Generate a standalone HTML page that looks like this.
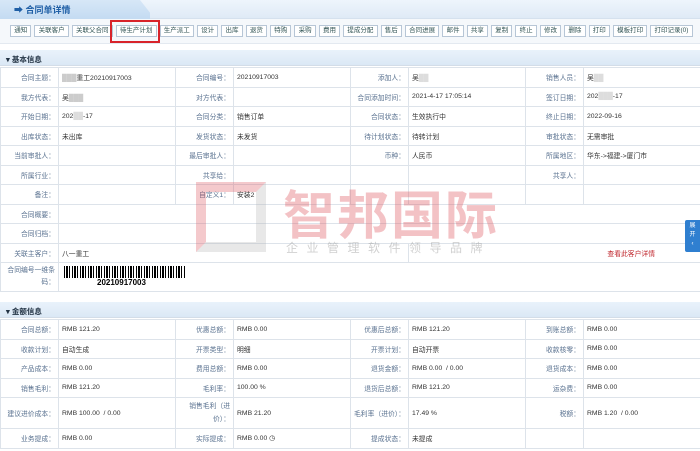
<!DOCTYPE html>
<html><head><meta charset="utf-8"><style>
*{margin:0;padding:0;box-sizing:border-box}
body{width:700px;height:451px;overflow:hidden;background:#fff;font-family:"Liberation Sans","Noto Sans CJK SC",sans-serif;font-size:7.5px;color:#333;position:relative}
.top{position:absolute;left:0;top:0;width:700px;height:19px;background:linear-gradient(#eef5fc,#dfeaf6);border-bottom:1px solid #d5e1ee}
.tab{position:absolute;left:0;top:0;width:150px;height:19px;background:linear-gradient(#d7e7f7,#c4dbf2);clip-path:polygon(0 0,140px 0,155px 19px,0 19px)}
.title{position:absolute;left:14px;top:3px;font-size:9px;font-weight:bold;color:#1f5fa6}
.bar{position:absolute;left:0;top:19px;width:700px;height:25px;background:#f5f8fb;border-bottom:1px solid #e3e9f0}
.btns{position:absolute;left:10px;top:25px;display:flex;gap:3px}
.btns span{border:1px solid #b7c6d6;background:#fff;height:12px;line-height:10px;padding:0 3.2px;color:#355;font-size:6.5px;white-space:nowrap}
.red{position:absolute;left:110px;top:20px;width:50px;height:23px;border:2px solid #d8232a}
.sec{position:absolute;left:0;width:700px;height:16px;background:linear-gradient(#e9f2fb,#dbe8f5);font-size:7.5px;font-weight:bold;color:#234;padding:4px 0 0 6px;border-bottom:1px solid #d3dde8}
table{position:absolute;left:0;width:700px;border-collapse:collapse;table-layout:fixed}
td{border:1px solid #dde3ea;height:19.5px;padding:0 3px;font-size:6.8px;white-space:nowrap;overflow:hidden}
td.l{text-align:right;color:#5a7290}
.wm{position:absolute;left:283px;top:174px;font-size:52px;color:rgba(220,80,90,.35);font-weight:bold;letter-spacing:2px;font-family:"Noto Sans CJK SC",sans-serif}
.wm2{position:absolute;left:286px;top:239px;font-size:12px;color:rgba(150,150,150,.45);letter-spacing:8.5px;font-family:"Noto Sans CJK SC",sans-serif}
.side{position:absolute;left:685px;top:220px;width:15px;height:32px;background:#2f7fd0;color:#fff;font-size:6px;text-align:center;line-height:9px;padding-top:2px;border-radius:2px 0 0 2px}
</style></head><body>
<div class="top"><div class="tab"></div><div class="title">➡ 合同单详情</div></div>
<div class="bar"></div>
<div class="btns"><span>通知</span><span>关联客户</span><span>关联父合同</span><span>待生产计划</span><span>生产派工</span><span>设计</span><span>出库</span><span>退货</span><span>特购</span><span>采购</span><span>费用</span><span>提成分配</span><span>售后</span><span>合同进展</span><span>邮件</span><span>共享</span><span>复制</span><span>终止</span><span>修改</span><span>删除</span><span>打印</span><span>模板打印</span><span>打印记录(0)</span></div>
<div class="red"></div>
<div class="sec" style="top:50px">▾ 基本信息</div>
<table style="top:67px">
<colgroup><col width="58"><col width="117"><col width="58"><col width="117"><col width="58"><col width="117"><col width="58"><col width="117"></colgroup>
<tr><td class="l">合同主题：</td><td><span style="color:#ccc">███</span>重工20210917003</td><td class="l">合同编号：</td><td>20210917003</td><td class="l">添加人：</td><td>吴<span style="color:#ddd">██</span></td><td class="l">销售人员：</td><td>吴<span style="color:#ddd">██</span></td></tr>
<tr><td class="l">我方代表：</td><td>吴<span style="color:#ccc">███</span></td><td class="l">对方代表：</td><td></td><td class="l">合同添加时间：</td><td>2021-4-17 17:05:14</td><td class="l">签订日期：</td><td>202<span style="color:#ddd">███</span>-17</td></tr>
<tr><td class="l">开始日期：</td><td>202<span style="color:#ddd">██</span>-17</td><td class="l">合同分类：</td><td>销售订单</td><td class="l">合同状态：</td><td>生效执行中</td><td class="l">终止日期：</td><td>2022-09-16</td></tr>
<tr><td class="l">出库状态：</td><td>未出库</td><td class="l">发货状态：</td><td>未发货</td><td class="l">待计划状态：</td><td>待转计划</td><td class="l">审批状态：</td><td>无需审批</td></tr>
<tr><td class="l">当前审批人：</td><td></td><td class="l">最后审批人：</td><td></td><td class="l">币种：</td><td>人民币</td><td class="l">所属地区：</td><td>华东->福建->厦门市</td></tr>
<tr><td class="l">所属行业：</td><td></td><td class="l">共享给：</td><td></td><td class="l"></td><td></td><td class="l">共享人：</td><td></td></tr>
<tr><td class="l">备注：</td><td></td><td class="l">自定义1：</td><td>安装2</td><td class="l"></td><td></td><td class="l"></td><td></td></tr>
<tr><td class="l">合同概要：</td><td colspan="7"></td></tr>
<tr><td class="l">合同归档：</td><td colspan="7"></td></tr>
<tr><td class="l">关联主客户：</td><td colspan="4">八一重工</td><td colspan="3" style="text-align:right;color:#c0282e;padding-right:45px">查看此客户详情</td></tr>
<tr><td class="l" style="height:29px;white-space:normal;line-height:12px">合同编号一维条码：</td><td colspan="7" style="position:relative"><div style="position:absolute;left:5px;top:3px;width:122px;height:12px;background:repeating-linear-gradient(90deg,#000 0 1px,#fff 1px 2px,#000 2px 4px,#fff 4px 5px,#000 5px 6px,#fff 6px 8px)"></div><div style="position:absolute;left:38px;top:15px;font-weight:bold;font-size:8px;color:#000">20210917003</div></td></tr>
</table>
<div style="position:absolute;left:196px;top:182px;width:70px;height:70px;border:10px solid rgba(180,180,180,.3);border-left-color:rgba(220,80,90,.3);border-top-color:rgba(220,80,90,.3)"></div>
<div class="wm">智邦国际</div>
<div class="wm2">企业管理软件领导品牌</div>
<div class="side">展<br>开<br>‹</div>
<div class="sec" style="top:302px">▾ 金额信息</div>
<table style="top:319px">
<colgroup><col width="58"><col width="117"><col width="58"><col width="117"><col width="58"><col width="117"><col width="58"><col width="117"></colgroup>
<tr><td class="l">合同总额：</td><td>RMB 121.20</td><td class="l">优惠总额：</td><td>RMB 0.00</td><td class="l">优惠后总额：</td><td>RMB 121.20</td><td class="l">到账总额：</td><td>RMB 0.00</td></tr>
<tr><td class="l">收款计划：</td><td>自动生成</td><td class="l">开票类型：</td><td>明细</td><td class="l">开票计划：</td><td>自动开票</td><td class="l">收款核零：</td><td>RMB 0.00</td></tr>
<tr><td class="l">产品成本：</td><td>RMB 0.00</td><td class="l">费用总额：</td><td>RMB 0.00</td><td class="l">退货金额：</td><td>RMB 0.00 &nbsp;/ 0.00</td><td class="l">退货成本：</td><td>RMB 0.00</td></tr>
<tr><td class="l">销售毛利：</td><td>RMB 121.20</td><td class="l">毛利率：</td><td>100.00 %</td><td class="l">退货后总额：</td><td>RMB 121.20</td><td class="l">运杂费：</td><td>RMB 0.00</td></tr>
<tr><td class="l" style="height:31px">建议进价成本：</td><td>RMB 100.00 &nbsp;/ 0.00</td><td class="l" style="white-space:normal;line-height:13px">销售毛利（进价）：</td><td>RMB 21.20</td><td class="l">毛利率（进价）：</td><td>17.49 %</td><td class="l">税额：</td><td>RMB 1.20 &nbsp;/ 0.00</td></tr>
<tr><td class="l">业务提成：</td><td>RMB 0.00</td><td class="l">实际提成：</td><td>RMB 0.00 ◷</td><td class="l">提成状态：</td><td>未提成</td><td class="l"></td><td></td></tr>
</table>
</body></html>
